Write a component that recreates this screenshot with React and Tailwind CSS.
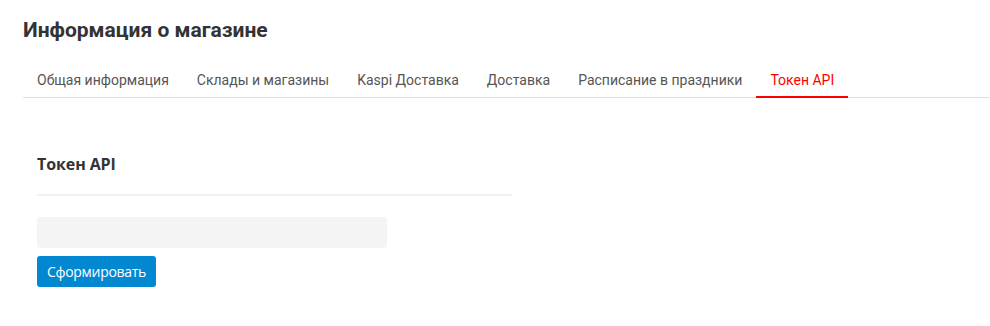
const tabs = [
  "Общая информация",
  "Склады и магазины",
  "Kaspi Доставка",
  "Доставка",
  "Расписание в праздники",
  "Токен API",
];

const App = () => {
  return (
    <div className="w-[990px] h-[326px] bg-white font-['Roboto',sans-serif] pl-[23px] pt-[16px]">
      <h1 className="text-[21px] leading-[28px] font-bold text-[#333]">Информация о магазине</h1>
      <div className="flex border-b border-[#dedede] mt-[22px]">
        {tabs.map((t, i) =>
          i === tabs.length - 1 ? (
            <div key={t} className="px-[14px] pb-[6px] pt-[4px] text-[14px] leading-[20px] text-[#ff0000] border-b-2 border-[#ff0000] -mb-px">
              {t}
            </div>
          ) : (
            <div key={t} className="px-[14px] pb-[7px] pt-[4px] text-[14px] leading-[20px] text-[#555]">
              {t}
            </div>
          )
        )}
      </div>
      <div className="pl-[14px] pt-[54px] w-[489px]">
        <h2 className="text-[16px] leading-[24px] font-bold text-[#333] font-['Open_Sans',sans-serif] tracking-[-0.1px]">Токен API</h2>
        <div className="h-[2px] bg-[#f0f0f0] mt-[18px]"></div>
        <div className="w-[350px] h-[31px] rounded-[4px] bg-[#f4f4f4] mt-[21px]"></div>
        <button className="mt-[8px] h-[31px] px-[10px] rounded-[3px] bg-[#0288d1] text-white text-[14px] font-['Open_Sans',sans-serif] tracking-[-0.3px]">
          Сформировать
        </button>
      </div>
    </div>
  );
};

export default App;
